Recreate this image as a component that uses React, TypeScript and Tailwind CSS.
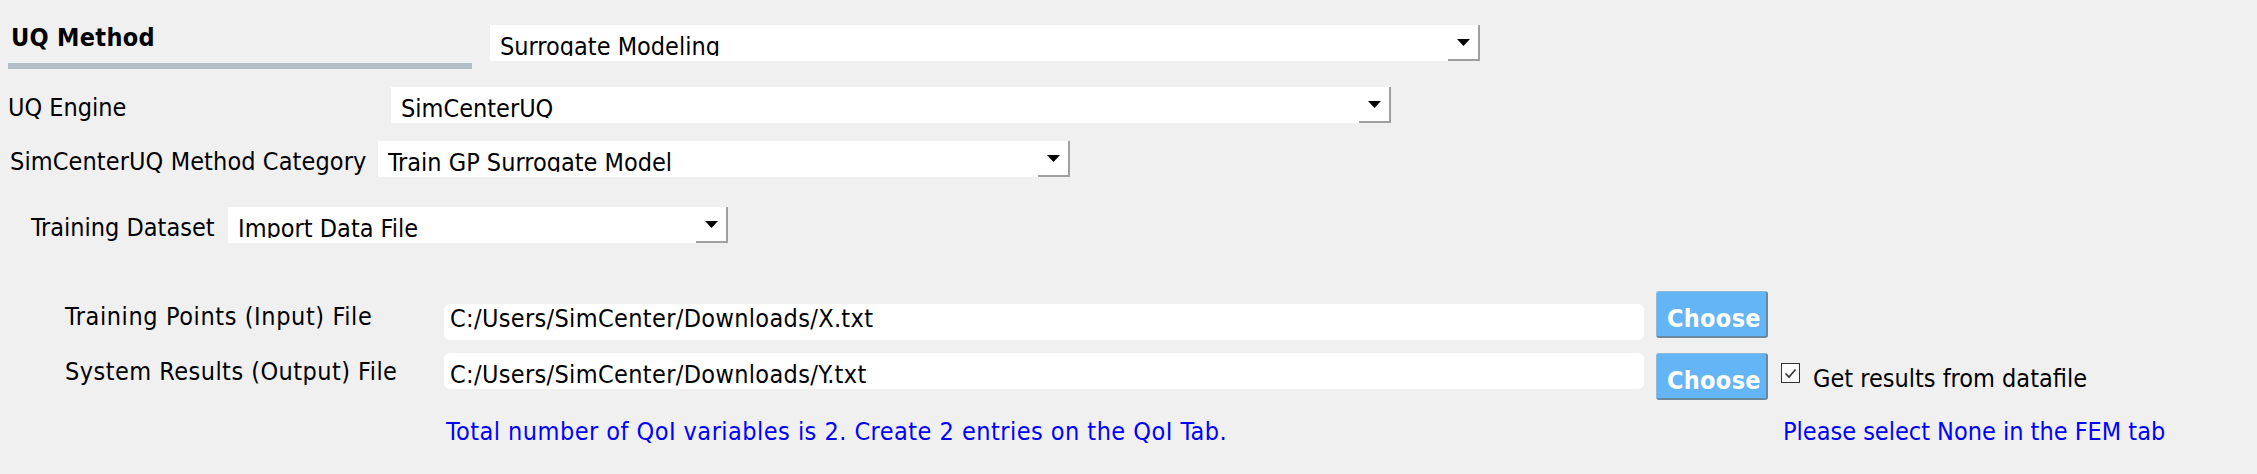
import React from "react";

function Arrow() {
  return (
    <svg width="13" height="7" viewBox="0 0 13 7" className="block">
      <polygon points="0,0 13,0 6.5,7" fill="#000" />
    </svg>
  );
}

function Combo({ className, text }: { className: string; text: string }) {
  return (
    <div className={`flex h-[36px] bg-white ${className}`}>
      <div className="min-w-0 flex-1 pl-[10px]">
        <div className="mt-[7px] h-[24px] overflow-hidden whitespace-nowrap leading-[29px] text-black">
          {text}
        </div>
      </div>
      <div className="flex h-full w-[32px] items-center justify-center border-r-2 border-b-2 border-[#a0a0a0]">
        <Arrow />
      </div>
    </div>
  );
}

function FileInput({ text }: { text: string }) {
  return (
    <div className="h-[36px] w-[1200px] rounded-[6px] bg-white pl-[6px]">
      <div className="mt-[7px] h-[29px] overflow-hidden whitespace-nowrap leading-[29px] tracking-[0.34px] text-black">
        {text}
      </div>
    </div>
  );
}

function ChooseButton() {
  return (
    <div className="h-[47px] w-[112px] rounded-[3px] border border-t-[#8fbad8] border-l-[#8fbad8] border-r-2 border-b-2 border-r-[#6a889e] border-b-[#6a889e] bg-[#64b5f6] pt-[12px] pl-[10px] font-bold leading-[29px] tracking-[0.3px] text-white">
      Choose
    </div>
  );
}

export default function App() {
  return (
    <div className="flex h-[474px] w-[2257px] flex-col bg-[#f0f0f0] font-['DejaVu_Sans_Condensed','Liberation_Sans',sans-serif] text-[25px] leading-[29px] text-black">
      {/* Row 1 */}
      <div className="flex items-start">
        <div className="ml-[8px] w-[464px] pt-[23px]">
          <div className="pl-[3px] font-bold leading-[29px] tracking-[0.3px]">UQ Method</div>
          <div className="mt-[11px] h-[6px] bg-[#b3bfc6]" />
        </div>
        <Combo className="mt-[25px] ml-[18px] w-[990px]" text="Surrogate Modeling" />
      </div>

      {/* Row 2 */}
      <div className="mt-[18px] flex items-start">
        <div className="mt-[6px] w-[391px] pl-[8px]">UQ Engine</div>
        <Combo className="w-[1000px]" text="SimCenterUQ" />
      </div>

      {/* Row 3 */}
      <div className="mt-[18px] flex items-start">
        <div className="mt-[6px] w-[378px] whitespace-nowrap pl-[10px] tracking-[0.1px]">SimCenterUQ Method Category</div>
        <Combo className="w-[692px]" text="Train GP Surrogate Model" />
      </div>

      {/* Row 4 */}
      <div className="mt-[30px] flex items-start">
        <div className="mt-[6px] w-[228px] whitespace-nowrap pl-[31px]">Training Dataset</div>
        <Combo className="w-[500px]" text="Import Data File" />
      </div>

      {/* Row 5 */}
      <div className="mt-[48px] flex items-start">
        <div className="mt-[11px] w-[444px] whitespace-nowrap pl-[65px] tracking-[0.6px]">Training Points (Input) File</div>
        <div className="mt-[6px]">
          <FileInput text="C:/Users/SimCenter/Downloads/X.txt" />
        </div>
        <div className="ml-[12px]">
          <ChooseButton />
        </div>
      </div>

      {/* Row 6 */}
      <div className="mt-[13px] flex items-start">
        <div className="mt-[4px] w-[444px] whitespace-nowrap pl-[65px] tracking-[0.46px]">System Results (Output) File</div>
        <FileInput text="C:/Users/SimCenter/Downloads/Y.txt" />
        <div className="ml-[12px]">
          <ChooseButton />
        </div>
        <div className="ml-[13px] mt-[10px] flex h-[20px] w-[19px] items-center justify-center border border-[#333333] bg-white">
          <svg width="13" height="11" viewBox="0 0 13 11" className="block">
            <polyline points="1.5,5.5 5,9 11.5,1.5" fill="none" stroke="#333333" strokeWidth="1.6" />
          </svg>
        </div>
        <div className="ml-[13px] mt-[11px] whitespace-nowrap">Get results from datafile</div>
      </div>

      {/* Row 7 */}
      <div className="mt-[17px] flex items-start text-[#0000ff]">
        <div className="w-[1783px] whitespace-nowrap pl-[446px] tracking-[0.47px]">
          Total number of QoI variables is 2. Create 2 entries on the QoI Tab.
        </div>
        <div className="whitespace-nowrap">Please select None in the FEM tab</div>
      </div>
    </div>
  );
}
